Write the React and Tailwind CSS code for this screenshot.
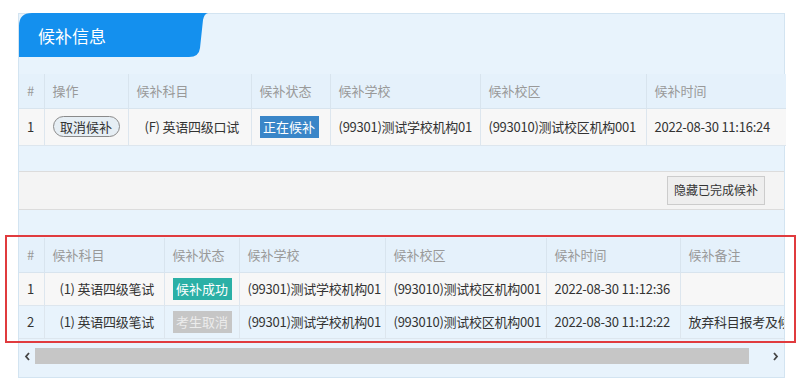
import React from "react";

const font = { fontFamily: '"Noto Sans CJK SC", "Noto Sans", sans-serif' };

function Tab() {
  return (
    <div className="relative w-[190px] h-[44px] -mt-px flex items-center pl-[19px]">
      <svg className="absolute inset-0" width="190" height="44" viewBox="0 0 190 44">
        <path d="M0,44 L0,13 Q0,0 13,0 L189,0 Q185,1 184,7 L181,35 Q180,44 170,44 Z" fill="#1490ee" />
      </svg>
      <span className="relative text-white text-[17px] leading-none">候补信息</span>
    </div>
  );
}

function Th({ children, w }) {
  return (
    <th
      className="border-r border-b border-[#d8e4ee] last:border-r-0 px-[8px] text-left font-normal text-[13px] text-[#999] whitespace-nowrap"
      style={{ width: w }}
    >
      {children}
    </th>
  );
}

function Td({ children, className = "" }) {
  return (
    <td className={"border-r border-b border-[#dde6ee] last:border-r-0 px-[8px] text-[13px] tracking-[-0.25px] text-[#333] whitespace-nowrap overflow-hidden " + className}>
      {children}
    </td>
  );
}

function Badge({ children, cls }) {
  return (
    <span className={"inline-flex items-center justify-center h-[22px] w-[59px] text-[13px] tracking-normal " + cls}>{children}</span>
  );
}

export default function App() {
  return (
    <div className="relative w-[800px] h-[383px] bg-white overflow-hidden" style={font}>
      <div className="ml-[18px] mt-[13px] w-[767px] h-[365px] bg-[#e8f3fc] border border-[#d3e4f1] flex flex-col">
        <Tab />
        <div className="h-[17px]" />
        <table className="table-fixed border-collapse w-[767px]">
          <thead>
            <tr className="h-[34px] bg-[#e5f1fb]">
              <Th w={25}>#</Th>
              <Th w={84}>操作</Th>
              <Th w={123}>候补科目</Th>
              <Th w={79}>候补状态</Th>
              <Th w={150}>候补学校</Th>
              <Th w={166}>候补校区</Th>
              <Th w={140}>候补时间</Th>
            </tr>
          </thead>
          <tbody>
            <tr className="h-[37px] bg-[#f7f7f7]">
              <Td>1</Td>
              <Td>
                <span className="inline-flex items-center justify-center h-[21px] w-[67px] rounded-full border border-[#8a8a8a] bg-[#e6eef4] text-[13px] tracking-normal text-[#333]">
                  取消候补
                </span>
              </Td>
              <Td className="pl-[16px]">(F) 英语四级口试</Td>
              <Td>
                <Badge cls="bg-[#3a86c8] text-white">正在候补</Badge>
              </Td>
              <Td>(99301)测试学校机构01</Td>
              <Td>(993010)测试校区机构001</Td>
              <Td>2022-08-30 11:16:24</Td>
            </tr>
          </tbody>
        </table>
        <div className="h-[25px]" />
        <div className="h-[39px] bg-[#f4f4f4] border-y border-[#dcdcdc] flex items-center justify-end pr-[19px]">
          <button className="h-[29px] px-[6px] bg-[#eeeeee] border border-[#cccccc] text-[12px] text-[#333]">
            隐藏已完成候补
          </button>
        </div>
        <div className="h-[28px]" />
        <div className="w-[765px] overflow-hidden">
          <table className="table-fixed border-collapse w-[880px]">
            <thead>
              <tr className="h-[35px] bg-[#e5f1fb]">
                <Th w={25}>#</Th>
                <Th w={120}>候补科目</Th>
                <Th w={75}>候补状态</Th>
                <Th w={146}>候补学校</Th>
                <Th w={161}>候补校区</Th>
                <Th w={134}>候补时间</Th>
                <Th w={219}>候补备注</Th>
              </tr>
            </thead>
            <tbody>
              <tr className="h-[33px] bg-[#f7f7f7]">
                <Td>1</Td>
                <Td className="pl-[15px]">(1) 英语四级笔试</Td>
                <Td>
                  <Badge cls="bg-[#2bb0a6] text-white">候补成功</Badge>
                </Td>
                <Td>(99301)测试学校机构01</Td>
                <Td>(993010)测试校区机构001</Td>
                <Td>2022-08-30 11:12:36</Td>
                <Td></Td>
              </tr>
              <tr className="h-[33px] bg-[#e8f3fc]">
                <Td>2</Td>
                <Td className="pl-[15px]">(1) 英语四级笔试</Td>
                <Td>
                  <Badge cls="bg-[#c6c6c6] text-[#ececec]">考生取消</Badge>
                </Td>
                <Td>(99301)测试学校机构01</Td>
                <Td>(993010)测试校区机构001</Td>
                <Td>2022-08-30 11:12:22</Td>
                <Td>放弃科目报考及候补</Td>
              </tr>
            </tbody>
          </table>
          <div className="h-[9px]" />
          <div className="h-[16px] flex items-stretch">
            <div className="w-[16px] flex items-center justify-center">
              <svg width="7" height="9" viewBox="0 0 7 9">
                <path d="M5,1 L2,4.5 L5,8" fill="none" stroke="#444" strokeWidth="1.8" />
              </svg>
            </div>
            <div className="w-[714px] bg-[#c6c6c6]" />
            <div className="flex-1 flex items-center justify-end pr-[5px]">
              <svg width="7" height="9" viewBox="0 0 7 9">
                <path d="M2,1 L5,4.5 L2,8" fill="none" stroke="#444" strokeWidth="1.8" />
              </svg>
            </div>
          </div>
        </div>
      </div>
      <div className="absolute left-[5px] top-[235px] w-[791px] h-[108px] border-2 border-[#e03b3e] pointer-events-none" />
    </div>
  );
}
